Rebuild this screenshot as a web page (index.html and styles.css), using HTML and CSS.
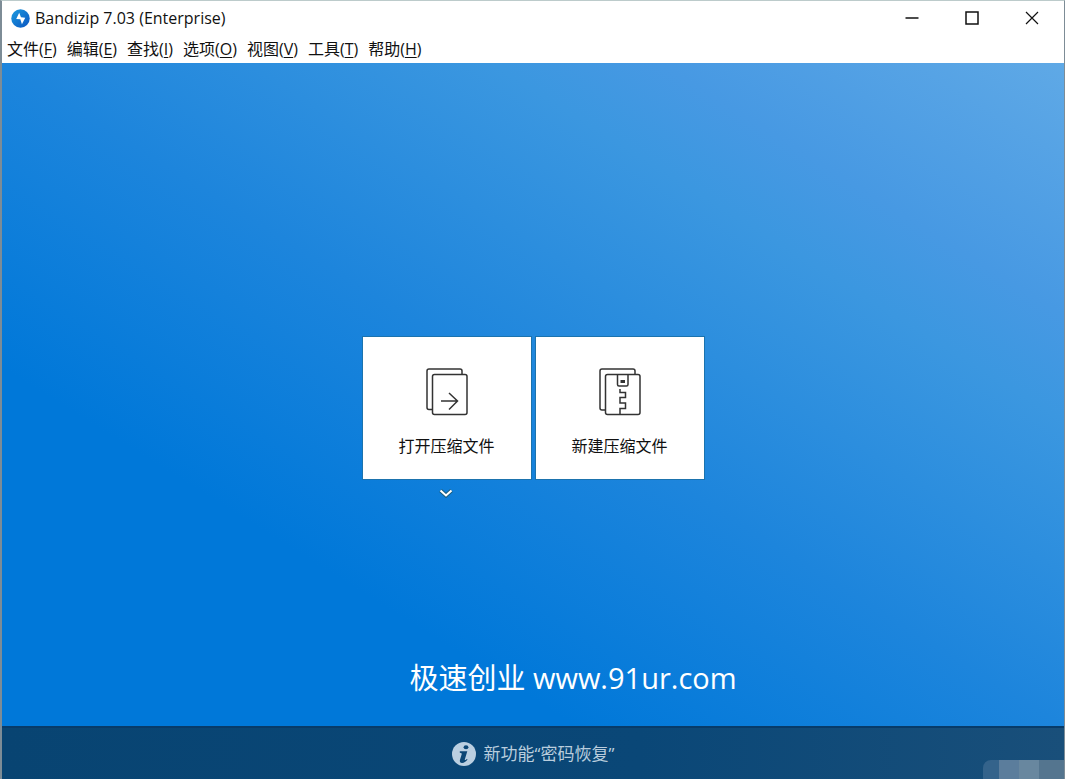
FILE: index.html
```html
<!DOCTYPE html>
<html lang="zh-CN">
<head>
<meta charset="utf-8">
<meta name="viewport" content="width=device-width, initial-scale=1">
<title>Bandizip 7.03 (Enterprise)</title>
<link rel="stylesheet" href="styles.css">
</head>
<body>
<div class="window">
  <header class="titlebar">
    <svg class="logo" viewBox="0 0 20 20" aria-hidden="true">
      <defs><linearGradient id="logo-fill" x1="0" y1="0" x2="1" y2="1"><stop offset="0" stop-color="#1c9be0"/><stop offset="1" stop-color="#0b55c0"/></linearGradient></defs>
      <circle cx="10" cy="10" r="9.7" fill="url(#logo-fill)"/>
      <path d="M8.600 4 5.500 10.400l4.300.5 1.700 5.100 3.500-6.800-4.500-.6z" fill="#fff"/>
    </svg>
    <h1 class="title">Bandizip 7.03 (Enterprise)</h1>
    <div class="controls">
      <button class="control" type="button" aria-label="最小化"><svg viewBox="0 0 14 14"><path d="M0.500 7h13"/></svg></button>
      <button class="control" type="button" aria-label="最大化"><svg viewBox="0 0 14 14"><path d="M1 1h12v12H1z"/></svg></button>
      <button class="control" type="button" aria-label="关闭"><svg viewBox="0 0 14 14"><path class="thin" d="m1 1 12 12M13 1 1 13"/></svg></button>
    </div>
  </header>
  <nav class="menu">
    <button class="menu-item" type="button">文件(<u>F</u>)</button>
    <button class="menu-item" type="button">编辑(<u>E</u>)</button>
    <button class="menu-item" type="button">查找(<u>I</u>)</button>
    <button class="menu-item" type="button">选项(<u>O</u>)</button>
    <button class="menu-item" type="button">视图(<u>V</u>)</button>
    <button class="menu-item" type="button">工具(<u>T</u>)</button>
    <button class="menu-item" type="button">帮助(<u>H</u>)</button>
  </nav>
  <div class="desk">
    <main class="stage">
      <div class="cards">
        <button class="card" type="button">
          <svg class="card-icon" viewBox="0 0 42 48" aria-hidden="true">
            <path d="M6 41.500H3a2 2 0 0 1-2-2V3a2 2 0 0 1 2-2h31a2 2 0 0 1 2 2v3"/>
            <rect x="6.500" y="6.500" width="34.500" height="40" rx="2"/>
            <path d="M15 33h16.500M23 25l8.500 8-8.500 8.500"/>
          </svg>
          <span>打开压缩文件</span>
        </button>
        <button class="card" type="button">
          <svg class="card-icon" viewBox="0 0 42 48" aria-hidden="true">
            <path d="M6 42H3a2 2 0 0 1-2-2V3a2 2 0 0 1 2-2h31a2 2 0 0 1 2 2v3"/>
            <rect x="6.500" y="6.500" width="34.500" height="40" rx="2"/>
            <path d="M18.500 6.500v10a1.500 1.500 0 0 0 1.500 1.500h7.500a1.500 1.500 0 0 0 1.500-1.500v-10"/>
            <path class="bold" d="M21.500 13.500h4.500"/>
            <path d="M21 21v3.500h5.500v5H21V35h5.500v5.500H21V46"/>
          </svg>
          <span>新建压缩文件</span>
        </button>
      </div>
      <div class="below">
        <button class="expand" type="button" aria-label="最近打开的文件">
          <svg viewBox="0 0 14 9" aria-hidden="true"><path class="edge" d="m1.500 1.500 5.500 5 5.500-5"/><path class="line" d="m1.500 1.500 5.500 5 5.500-5"/></svg>
        </button>
        <p class="watermark">极速创业 www.91ur.com</p>
      </div>
    </main>
    <footer class="notice">
      <a class="notice-link" href="#">
        <svg class="info" viewBox="0 0 24 24" aria-hidden="true">
          <circle cx="12" cy="12" r="12"/>
          <ellipse class="mark" cx="14" cy="5.300" rx="2.400" ry="2"/>
          <path class="mark" d="M7.800 9.300h7.500l-2.500 8.200c-.2.900.5.800 2-.6l.8.700c-1.900 2.500-3.800 3.500-5.600 3.400-1.900-.1-2.600-1.300-2-3.200l1.700-5.500c.3-1-.3-1.500-1.900-1.600z"/>
        </svg>
        <span>新功能“密码恢复”</span>
      </a>
      <div class="blocks"><i></i><i></i><i></i><i></i></div>
    </footer>
  </div>
</div>
</body>
</html>
```
FILE: styles.css
```css
* { box-sizing: border-box; }

body {
  margin: 0;
  font-family: "Open Sans", "Noto Sans CJK SC", sans-serif;
  font-size: 16px;
  color: #111;
}

button {
  border: 0;
  padding: 0;
  background: none;
  font: inherit;
  color: inherit;
}

.window {
  display: flex;
  flex-direction: column;
  min-height: 100vh;
  background: #fff;
  border: solid #7d8c96;
  border-width: 0 1px 0 2px;
  border-top: 1px solid #bccbcb;
}

.titlebar {
  display: flex;
  align-items: center;
  height: 34px;
  padding: 0 2px 0 9px;
}

.logo { width: 19px; height: 19px; }

.title {
  margin: 0 auto 0 5px;
  font-size: 16px;
  font-weight: 400;
}

.controls { display: flex; height: 100%; }

.control {
  display: flex;
  align-items: center;
  justify-content: center;
  width: 60px;
}

.control svg {
  width: 14px;
  height: 14px;
  fill: none;
  stroke: #111;
  stroke-width: 1.5;
}

.control .thin { stroke-width: 1.2; }

.menu {
  display: flex;
  align-items: center;
  gap: 10px;
  height: 28px;
  padding-left: 5px;
}

.menu-item {
  line-height: 24px;
  white-space: nowrap;
}

.menu-item u { text-underline-offset: 2px; }

.desk {
  display: flex;
  flex: 1;
  flex-direction: column;
}

.stage {
  display: grid;
  flex: 1;
  grid-template-rows: 1fr auto 1fr;
  justify-items: center;
  padding-top: 27px;
  background: linear-gradient(to top right, #0078d9 0%, #0078d9 27%, #1d85dc 50%, #3b97e0 73%, #4799e3 81%, #5fa9e6 100%);
}

.cards {
  display: grid;
  grid-row: 2;
  grid-template-columns: 170px 170px;
  gap: 3px;
}

.card {
  display: flex;
  flex-direction: column;
  align-items: center;
  gap: 18px;
  height: 144px;
  padding-top: 31px;
  background: #fff;
  border: 1px solid #1b73ae;
  line-height: 24px;
}

.card-icon {
  width: 42px;
  height: 48px;
  fill: none;
  stroke: #333;
  stroke-width: 1.5;
}

.card-icon .bold { stroke-width: 3; }

.below {
  display: flex;
  flex-direction: column;
  justify-content: space-between;
  align-items: center;
  grid-row: 3;
}

.expand {
  display: flex;
  justify-content: center;
  width: 170px;
  margin-right: 174px;
  padding: 9px 0;
}

.expand svg { width: 14px; height: 9px; fill: none; }
.expand .edge { stroke: #1a5f80; stroke-width: 4; }
.expand .line { stroke: #fff; stroke-width: 2; }

.watermark {
  margin: 0 0 28px 80px;
  font-size: 29px;
  line-height: 40px;
  color: #fff;
}

.notice {
  position: relative;
  display: flex;
  align-items: center;
  justify-content: center;
  height: 53px;
  background: linear-gradient(to right, #084472, #0a4777 60%, #194f7a);
  border-top: 2px solid #073b69;
}

.notice-link {
  display: flex;
  align-items: center;
  gap: 8px;
  color: #b9cddd;
  font-size: 17px;
  line-height: 24px;
  text-decoration: none;
}

.info { width: 24px; height: 24px; fill: #bacfe1; }
.info .mark { fill: #0b4675; }

.blocks {
  position: absolute;
  right: 0;
  bottom: 0;
  display: grid;
  grid-template-columns: 16px 20px 20px 25px;
  height: 19px;
  overflow: hidden;
  border-top-left-radius: 8px;
}

.blocks i:nth-child(1) { background: #34638b; }
.blocks i:nth-child(2) { background: #5b7d9c; }
.blocks i:nth-child(3) { background: #68879f; }
.blocks i:nth-child(4) { background: #54758f; }
```
